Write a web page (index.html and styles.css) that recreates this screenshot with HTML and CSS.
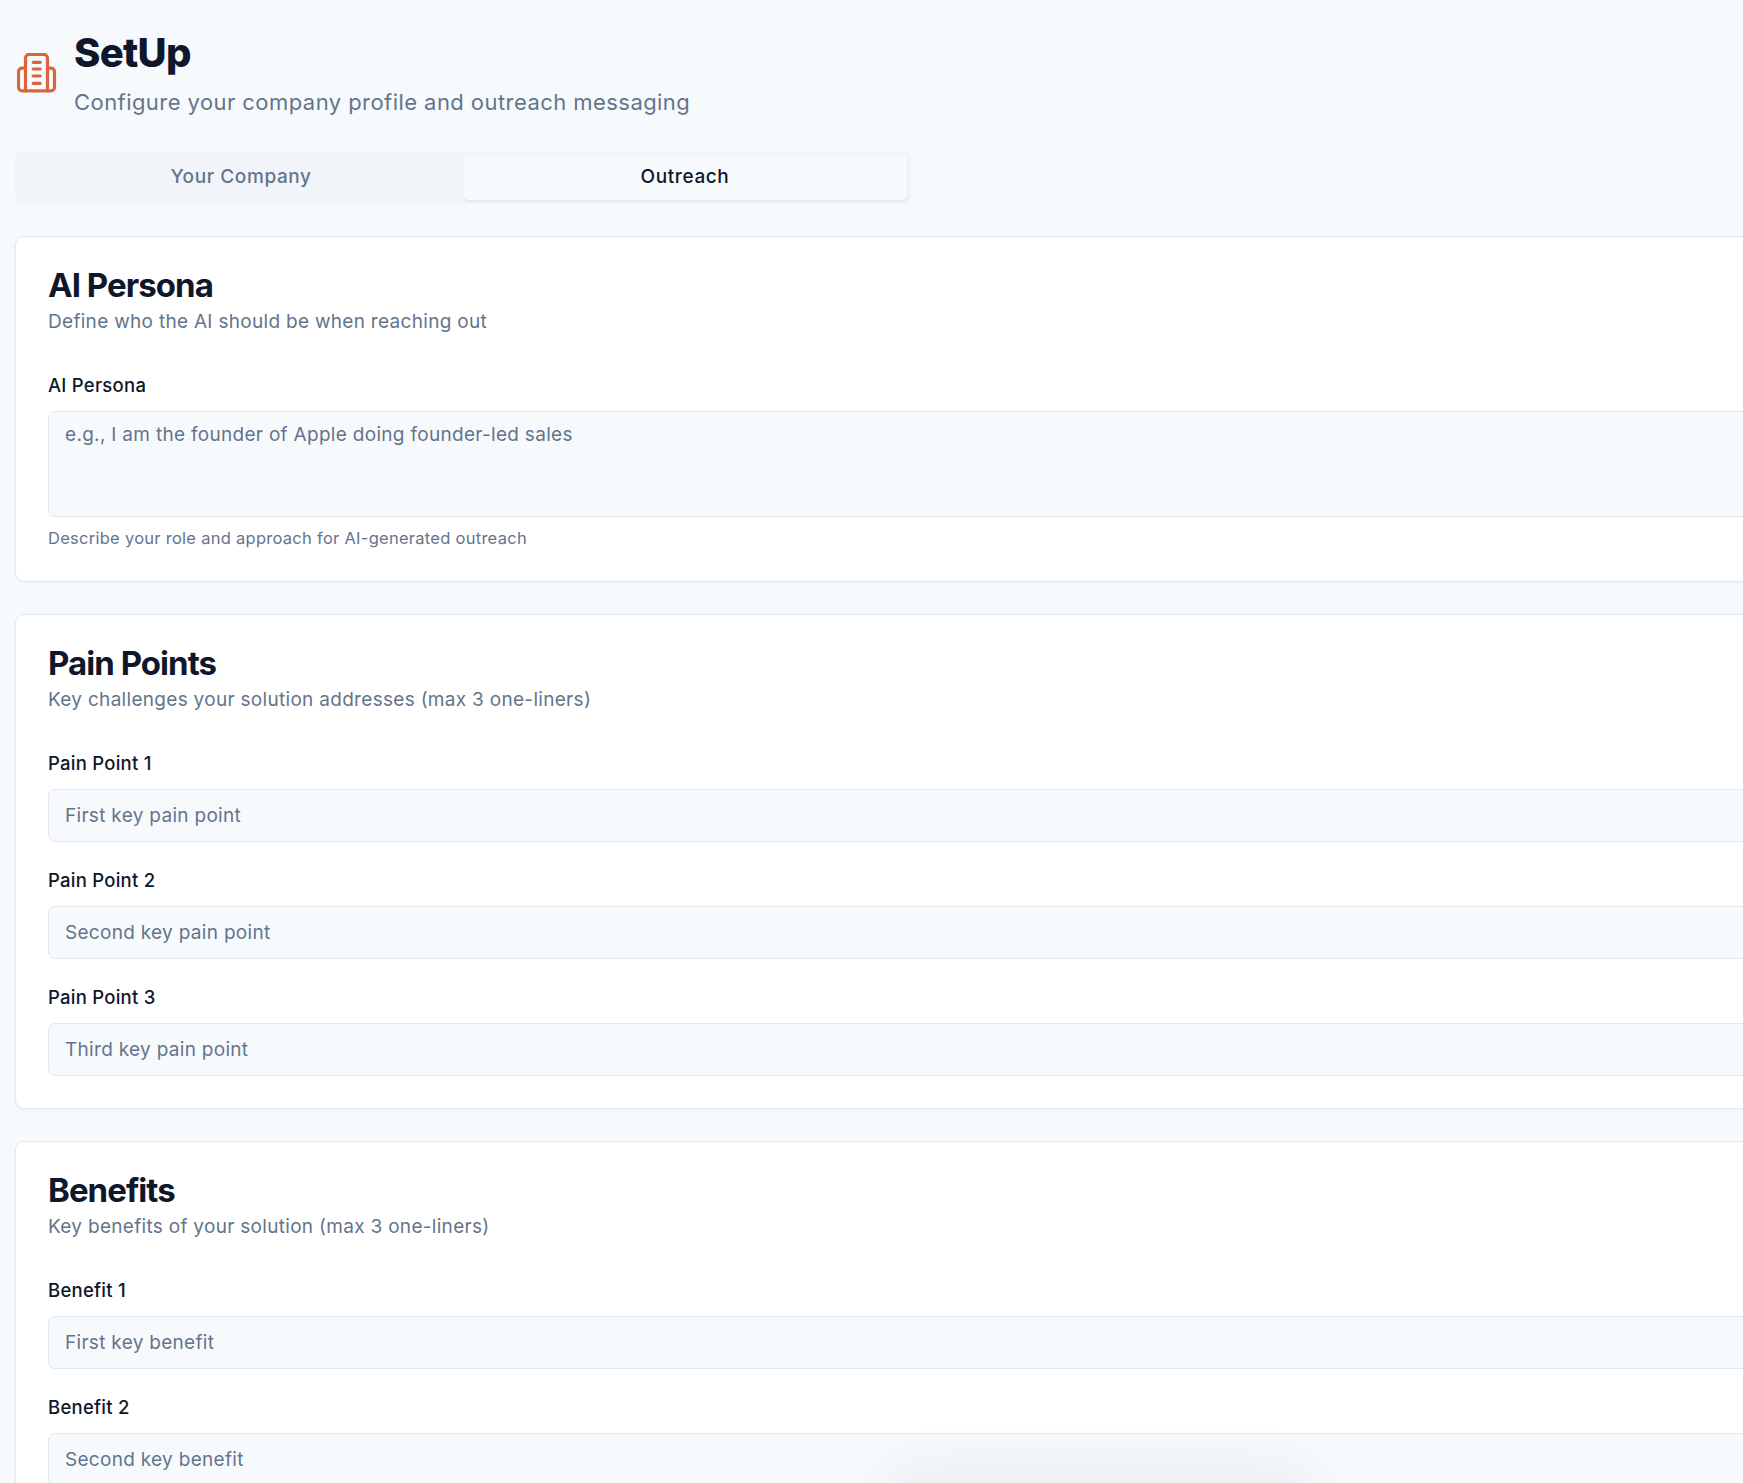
FILE: index.html
```html
<!DOCTYPE html>
<html lang="en">
<head>
<meta charset="utf-8">
<title>SetUp</title>
<link rel="stylesheet" href="styles.css">
</head>
<body>
<main class="page">
  <header class="page-head">
    <svg class="page-icon" viewBox="0 0 40 40" fill="none" stroke="#d8653f" stroke-width="3.200" stroke-linecap="round" stroke-linejoin="round" aria-hidden="true">
      <path d="M8.500 37.800V5A3.500 3.500 0 0 1 12 1.500h15A3.500 3.500 0 0 1 30.500 5v32.800"/>
      <path d="M8.500 15.200H5A3.500 3.500 0 0 0 1.500 18.700v15.600A3.500 3.500 0 0 0 5 37.800h29a3.500 3.500 0 0 0 3.500-3.500V18.700a3.500 3.500 0 0 0-3.500-3.500h-3.500"/>
      <path d="M16.200 9.300h7M16.200 16h7M16.200 23h7M16.200 30.300h7"/>
    </svg>
    <div class="page-titles">
      <h1 class="page-title">SetUp</h1>
      <p class="page-sub">Configure your company profile and outreach messaging</p>
    </div>
  </header>

  <div class="tabs">
    <button class="tab" type="button"><span class="tab-label">Your Company</span></button>
    <button class="tab tab-active" type="button"><span class="tab-label">Outreach</span></button>
  </div>

  <section class="card">
    <h2 class="card-title">AI Persona</h2>
    <p class="card-sub">Define who the AI should be when reaching out</p>
    <div class="fields">
      <div class="field">
        <label class="label">AI Persona</label>
        <textarea class="control control-area" placeholder="e.g., I am the founder of Apple doing founder-led sales"></textarea>
        <p class="help">Describe your role and approach for AI-generated outreach</p>
      </div>
    </div>
  </section>

  <section class="card">
    <h2 class="card-title">Pain Points</h2>
    <p class="card-sub">Key challenges your solution addresses (max 3 one-liners)</p>
    <div class="fields">
      <div class="field"><label class="label">Pain Point 1</label><input class="control" placeholder="First key pain point"></div>
      <div class="field"><label class="label">Pain Point 2</label><input class="control" placeholder="Second key pain point"></div>
      <div class="field"><label class="label">Pain Point 3</label><input class="control" placeholder="Third key pain point"></div>
    </div>
  </section>

  <section class="card">
    <h2 class="card-title">Benefits</h2>
    <p class="card-sub">Key benefits of your solution (max 3 one-liners)</p>
    <div class="fields">
      <div class="field"><label class="label">Benefit 1</label><input class="control" placeholder="First key benefit"></div>
      <div class="field"><label class="label">Benefit 2</label><input class="control" placeholder="Second key benefit"></div>
    </div>
  </section>
</main>
<div class="toast-shadow" aria-hidden="true"></div>
</body>
</html>
```
FILE: styles.css
```css
* { box-sizing: border-box; }
html, body { height: 100%; }
body {
  margin: 0;
  overflow: hidden;
  background: #f7fafd;
  color: #0f172a;
  font-family: Inter, "Liberation Sans", sans-serif;
}
.page {
  width: 1900px;
  padding: 31px 0 0 15px;
}
.page-head {
  display: flex;
  align-items: flex-start;
  gap: 17px;
  height: 89px;
  padding-left: 2px;
}
.page-icon { width: 40px; height: 40px; flex: none; margin-top: 22px; }
.page-title {
  margin: 0;
  font-size: 40px;
  line-height: 44px;
  font-weight: 800;
  letter-spacing: -0.7px;
}
.page-sub {
  margin: 12px 0 0;
  font-size: 22px;
  line-height: 30px;
  letter-spacing: 0.44px;
  color: #64748b;
}
.tabs {
  display: grid;
  grid-template-columns: 1fr 1fr;
  width: 896px;
  height: 53px;
  margin-top: 31px;
  padding: 4px;
  background: #f1f5f9;
  border-radius: 8px;
}
.tab {
  border: 0;
  padding: 0 0 2px;
  background: transparent;
  border-radius: 5px;
  font: 500 19px/26px Inter, "Liberation Sans", sans-serif;
  letter-spacing: 0.6px;
  color: #64748b;
}
.tab-active {
  background: #f7fafd;
  color: #0f172a;
  box-shadow: 0 1px 2px rgba(15, 23, 42, 0.09);
}
.card {
  margin-top: 32px;
  padding: 28px 32px 32px;
  background: #fff;
  border: 1px solid #e2e8f0;
  border-radius: 9px;
  box-shadow: 0 1px 3px rgba(15, 23, 42, 0.04);
}
.card-title {
  margin: 0;
  font-size: 33px;
  line-height: 40px;
  font-weight: 700;
  letter-spacing: -0.95px;
}
.card-sub {
  margin: 4px 0 0;
  font-size: 19px;
  line-height: 26px;
  letter-spacing: 0.3px;
  color: #64748b;
}
.fields { margin-top: 37px; display: flex; flex-direction: column; gap: 25px; }
.field { display: flex; flex-direction: column; }
.label {
  display: block;
  font-size: 18.5px;
  line-height: 26px;
  font-weight: 500;
  letter-spacing: 0.25px;
  margin-bottom: 13px;
}
.control {
  display: block;
  width: 100%;
  height: 53px;
  padding: 0 16px;
  background: #f7fafd;
  border: 1px solid #e2e8f0;
  border-radius: 7px;
  font: 400 19px/26px Inter, "Liberation Sans", sans-serif;
  letter-spacing: 0.3px;
  color: #0f172a;
  outline: none;
}
.control::placeholder { color: #64748b; opacity: 1; }
.control-area { height: 106px; padding: 10px 16px; resize: none; }
.help {
  margin: 10px 0 0;
  font-size: 16.5px;
  line-height: 22px;
  letter-spacing: 0.27px;
  color: #64748b;
}
.toast-shadow {
  position: fixed;
  left: 900px;
  bottom: -120px;
  width: 400px;
  height: 120px;
  border-radius: 16px;
  box-shadow: 0 0 60px 10px rgba(15, 23, 42, 0.07);
}
```
